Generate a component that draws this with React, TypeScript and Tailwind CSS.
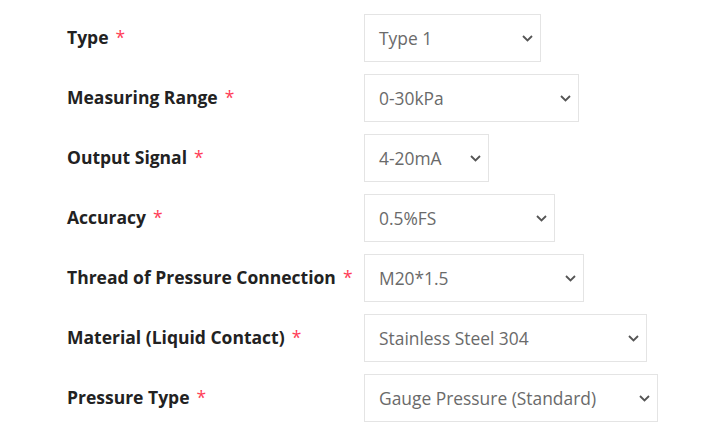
import React from 'react';

const fields = [
  { label: 'Type', value: 'Type 1', width: 'w-[177px]' },
  { label: 'Measuring Range', value: '0-30kPa', width: 'w-[215px]' },
  { label: 'Output Signal', value: '4-20mA', width: 'w-[125px]' },
  { label: 'Accuracy', value: '0.5%FS', width: 'w-[191px]' },
  { label: 'Thread of Pressure Connection', value: 'M20*1.5', width: 'w-[220px]' },
  { label: 'Material (Liquid Contact)', value: 'Stainless Steel 304', width: 'w-[283px]' },
  { label: 'Pressure Type', value: 'Gauge Pressure (Standard)', width: 'w-[294px]' },
];

const Chevron = () => (
  <svg width="11" height="7" viewBox="0 0 11 7" fill="none">
    <path d="M1 1l4.5 4.5L10 1" stroke="#555" strokeWidth="1.8" />
  </svg>
);

export default function App() {
  return (
    <div className="w-[715px] h-[440px] bg-white font-['Open_Sans',sans-serif]">
      <div className="pt-[14px] pl-[67px] flex flex-col gap-[12px]">
        {fields.map((f) => (
          <div key={f.label} className="flex items-center h-[48px]">
            <div className="w-[297px] shrink-0 mb-[2px] text-[17.5px] font-bold text-[#222]">
              {f.label}
              <span className="ml-[7px] text-[#ff3d57] font-normal">*</span>
            </div>
            <div
              className={`${f.width} h-[48px] border border-[#e4e4e4] flex items-center justify-between pl-[14px] pr-[7px] text-[17.4px] text-[#6a6a6a]`}
            >
              <span>{f.value}</span>
              <Chevron />
            </div>
          </div>
        ))}
      </div>
    </div>
  );
}
